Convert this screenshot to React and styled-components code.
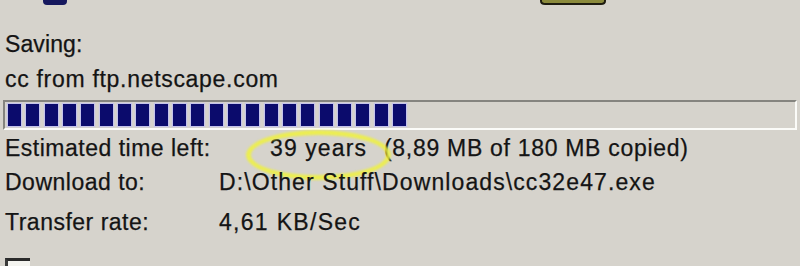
import React from 'react'
import styled, { createGlobalStyle } from 'styled-components'

const GlobalStyle = createGlobalStyle`
html, body {
    margin: 0;
    padding: 0;
    background: #d6d3cc;
    overflow: hidden;
}
body {
    font-family: "Liberation Sans", Arial, sans-serif;
    color: #141414;
    -webkit-text-stroke: 0.25px #141414;
}
`

const BLOCKS = 22

function App() {
    return(
        <Window>
            <GlobalStyle />
            <IconStrip>
                <IconSlot $left={43}>
                    <svg width="24" height="5" viewBox="0 0 24 5">
                        <path d="M0 0 H24 V1 Q24 5 20 5 H4 Q0 5 0 1 Z" fill="#16185e" />
                    </svg>
                </IconSlot>
                <IconSlot $left={473}>
                    <svg width="66" height="6" viewBox="0 0 66 6">
                        <path d="M0 0 H66 V1 Q66 5 61 5 H5 Q0 5 0 1 Z" fill="#1e1c10" />
                        <path d="M2 0 H64 V1 Q64 3 60 3 H6 Q2 3 2 1 Z" fill="#8b8a3c" />
                    </svg>
                </IconSlot>
            </IconStrip>

            <Line>Saving:</Line>
            <Line $spacing="0.7px">cc from ftp.netscape.com</Line>

            <Progress>
                {Array.from({ length: BLOCKS }).map((_, i) => <Block key={i} />)}
            </Progress>

            <Details>
                <Label $h={34}>Estimated time left:</Label>
                <Value $h={34}>
                    <Years>39 years</Years>
                    <Copied>(8,89 MB of 180 MB copied)</Copied>
                    <Circle />
                </Value>

                <Label $h={40}>Download to:</Label>
                <Value $h={40}>D:\Other Stuff\Downloads\cc32e47.exe</Value>

                <Label $h={35}>Transfer rate:</Label>
                <Value $h={35} $spacing="1.3px">4,61 KB/Sec</Value>
            </Details>

            <CheckRow>
                <CheckBox />
            </CheckRow>
        </Window>
    )
}

export default App

const Window = styled.div`
width: 800px;
height: 266px;
padding: 0 0 0 5px;
box-sizing: border-box;
overflow: hidden;
`

const IconStrip = styled.div`
height: 27px;
display: flex;
align-items: flex-start;
margin-left: -5px;
`

const IconSlot = styled.div`
margin-left: ${p => p.$left}px;
line-height: 0;
filter: blur(0.5px);
`

const Line = styled.div`
font-size: 23px;
line-height: 35px;
height: 35px;
letter-spacing: ${p => p.$spacing || '0.1px'};
white-space: nowrap;
`

const Progress = styled.div`
margin: 3px 3px 0 -2px;
height: 30px;
box-sizing: border-box;
border-top: 2px solid #85847f;
border-left: 2px solid #85847f;
border-bottom: 2px solid #fbfbf8;
border-right: 2px solid #fbfbf8;
padding: 2px 3px;
display: flex;
gap: 5.33px;
`

const Block = styled.div`
width: 13px;
height: 22px;
background: #0b0b6c;
box-shadow: 0 0 1px 1px rgba(190, 190, 245, 0.75);
`

const Details = styled.div`
margin-top: 1px;
display: grid;
grid-template-columns: 214px 1fr;
font-size: 23px;
`

const Label = styled.div`
height: ${p => p.$h}px;
line-height: 35px;
letter-spacing: 0.5px;
white-space: nowrap;
`

const Value = styled.div`
position: relative;
height: ${p => p.$h}px;
line-height: 35px;
letter-spacing: ${p => p.$spacing || '1.1px'};
white-space: nowrap;
display: flex;
`

const Years = styled.span`
margin-left: 51px;
letter-spacing: 1.1px;
`

const Copied = styled.span`
margin-left: 17px;
letter-spacing: 0.7px;
`

const Circle = styled.div`
position: absolute;
left: 27px;
top: -1px;
width: 145px;
height: 50px;
box-sizing: border-box;
border: 5px solid rgba(240, 242, 60, 0.85);
border-radius: 50%;
filter: blur(1px);
pointer-events: none;
`

const CheckRow = styled.div`
margin-top: 18px;
display: flex;
align-items: flex-start;
`

const CheckBox = styled.div`
width: 25px;
height: 25px;
box-sizing: border-box;
border-top: 3px solid #2a2a2a;
border-left: 3px solid #3a3a3a;
background: #f4f4f0;
flex-shrink: 0;
`
